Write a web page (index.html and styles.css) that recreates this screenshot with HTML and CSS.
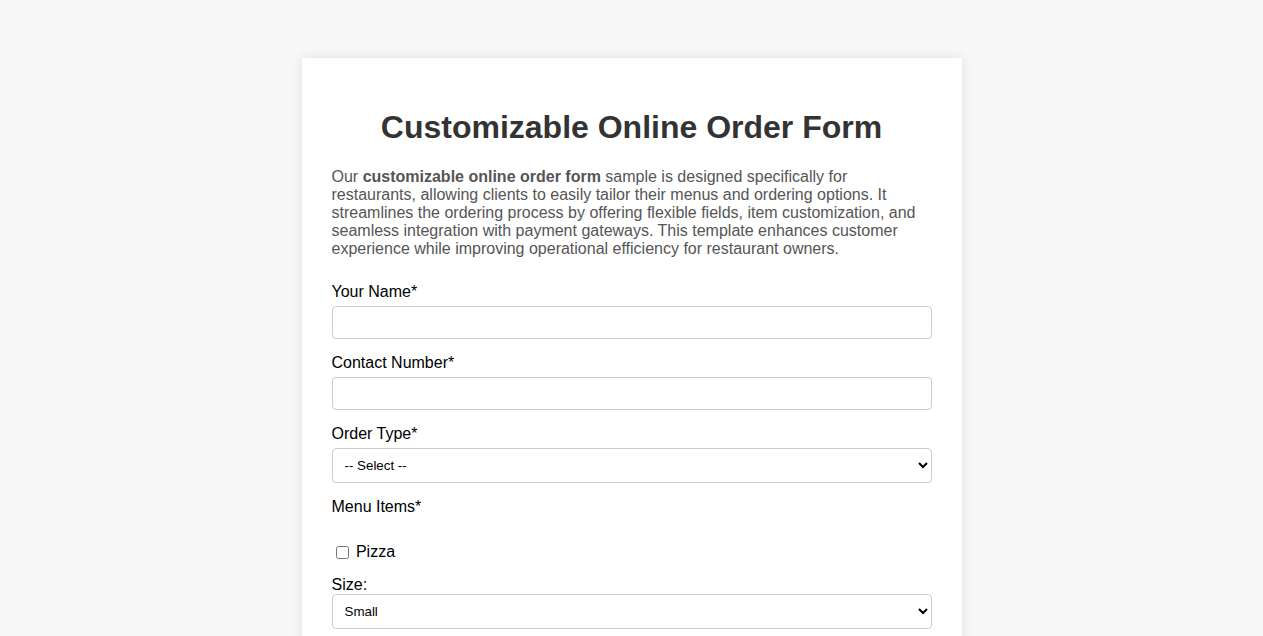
FILE: index.html
```html
<!DOCTYPE html>
<html lang="en">
<head>
<meta charset="utf-8">
<title>Customizable Online Order Form</title>
<link rel="stylesheet" href="styles.css">
</head>
<body>
<div class="container">
  <h1 class="title">Customizable Online Order Form</h1>
  <p class="intro">Our <strong>customizable online order form</strong> sample is designed specifically for restaurants, allowing clients to easily tailor their menus and ordering options. It streamlines the ordering process by offering flexible fields, item customization, and seamless integration with payment gateways. This template enhances customer experience while improving operational efficiency for restaurant owners.</p>
  <form class="order-form">
    <div class="form-group">
      <label class="field-label" for="name">Your Name*</label>
      <input class="field" type="text" id="name">
    </div>
    <div class="form-group">
      <label class="field-label" for="phone">Contact Number*</label>
      <input class="field" type="tel" id="phone">
    </div>
    <div class="form-group">
      <label class="field-label" for="type">Order Type*</label>
      <select class="field select" id="type">
        <option>-- Select --</option>
        <option>Pickup</option>
        <option>Delivery</option>
      </select>
    </div>
    <div class="form-group">
      <label class="field-label">Menu Items*</label>
      <div class="menu-items">
        <label class="check-label"><input type="checkbox" class="check"> Pizza</label>
        <div class="sub-group">
          <label class="size-label" for="size">Size:</label>
          <select class="field select" id="size">
            <option>Small</option>
            <option>Medium</option>
            <option>Large</option>
          </select>
        </div>
      </div>
    </div>
  </form>
</div>
</body>
</html>
```

FILE: styles.css
```css
html, body {
  background: #f7f7f7;
}
body {
  margin: 8px;
  font-family: "Liberation Sans", Arial, sans-serif;
  color: #000;
}
.container {
  width: 600px;
  margin: 50px auto;
  padding: 30px;
  background: #fff;
  box-shadow: 0 0 10px rgba(0, 0, 0, 0.1);
}
.title {
  text-align: center;
  color: #333;
  font-size: 32px;
  margin: 21px 0 22px;
}
.intro {
  color: #555;
  font-size: 16px;
  line-height: 18px;
  margin: 0 0 25px;
}
.form-group {
  margin-bottom: 15px;
}
.field-label {
  display: block;
  margin-bottom: 5px;
  font-size: 16px;
}
.field {
  display: block;
  width: 100%;
  box-sizing: border-box;
  padding: 8px;
  border: 1px solid #ccc;
  border-radius: 4px;
  background: #fff;
  font-family: "Liberation Sans", Arial, sans-serif;
  font-size: 13.33px;
  height: 33px;
}
.select {
  height: 35px;
}
.menu-items {
  padding-top: 22px;
}
.check-label {
  display: block;
  font-size: 16px;
  line-height: 18px;
}
.check {
  margin: 3px 3px 3px 4px;
  vertical-align: -2px;
}
.sub-group {
  margin-top: 14px;
}
.size-label {
  display: block;
  font-size: 16px;
  margin-bottom: 0;
}
```
